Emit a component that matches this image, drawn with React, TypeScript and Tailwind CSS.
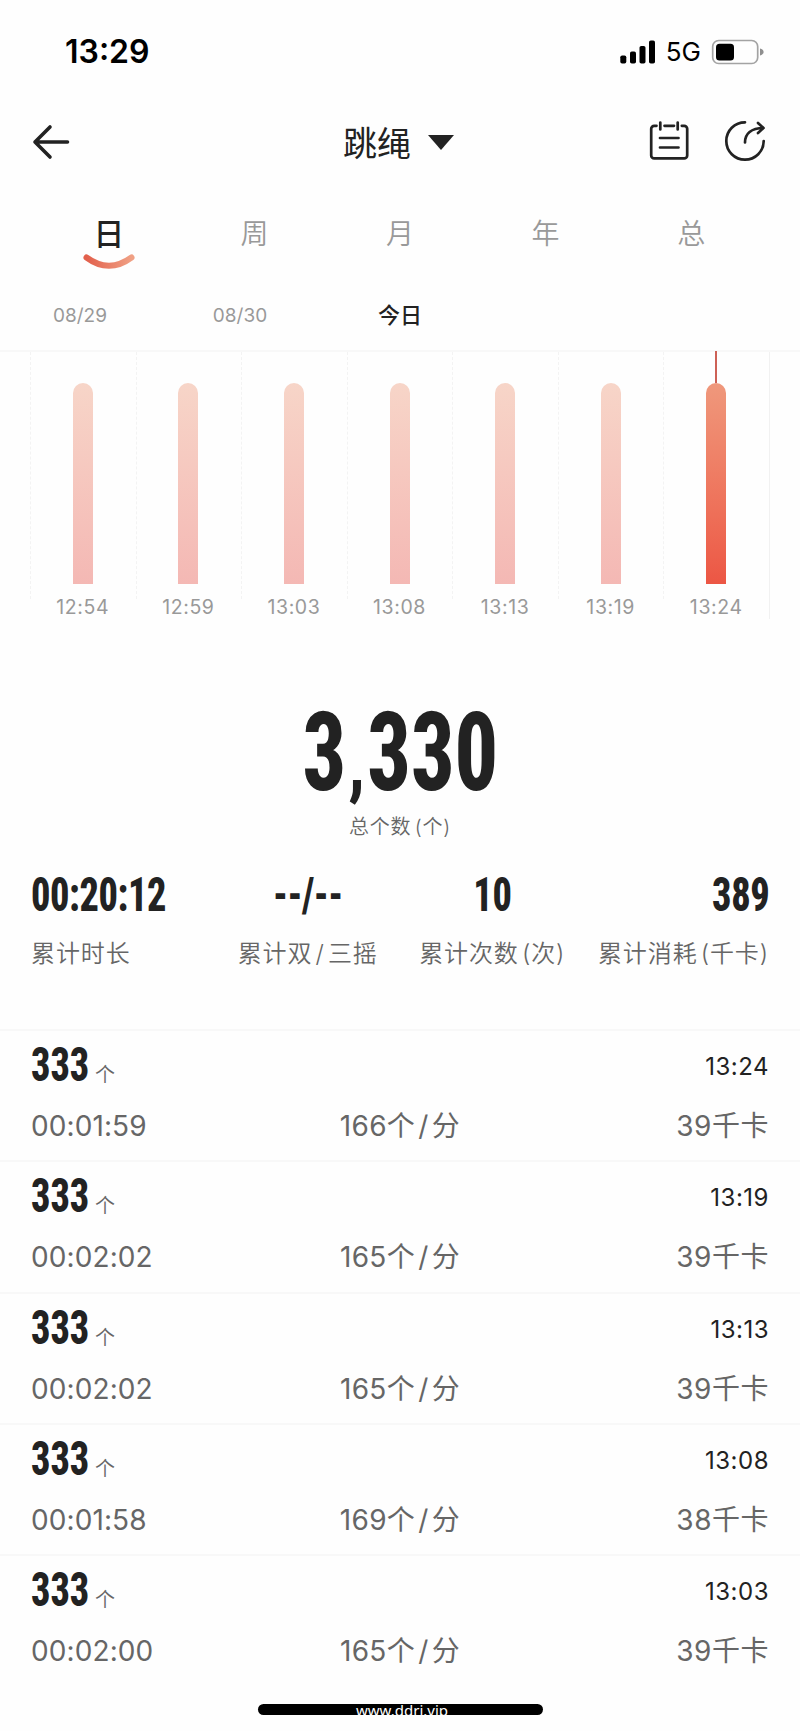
import type { ReactNode } from 'react';
import clsx from 'clsx';

const TABS = ['日', '周', '月', '年', '总'];
const DATES = ['08/29', '08/30', '今日'];
const SESSIONS = ['12:54', '12:59', '13:03', '13:08', '13:13', '13:19', '13:24'];

const RECORDS = [
  { count: 333, time: '13:24', duration: '00:01:59', pace: 166, kcal: 39 },
  { count: 333, time: '13:19', duration: '00:02:02', pace: 165, kcal: 39 },
  { count: 333, time: '13:13', duration: '00:02:02', pace: 165, kcal: 39 },
  { count: 333, time: '13:08', duration: '00:01:58', pace: 169, kcal: 38 },
  { count: 333, time: '13:03', duration: '00:02:00', pace: 165, kcal: 39 },
];

/** Condensed display number. `className` carries the size and scale origin. */
function Condensed({ children, className }: { children: ReactNode; className?: string }) {
  return (
    <span
      className={clsx(
        "block w-max whitespace-nowrap scale-x-[0.78] font-['Roboto','Liberation_Sans',sans-serif] font-extrabold text-[#222] [font-stretch:75%]",
        className,
      )}
    >
      {children}
    </span>
  );
}

function StatusBar() {
  return (
    <div className="flex h-[102px] items-center justify-between pl-[65px] pr-[35px] pt-px">
      <span className="text-[32px] font-semibold leading-none text-black">13:29</span>
      <div className="flex items-center">
        <svg width="36" height="24" viewBox="0 0 36 24">
          <rect x="0.3" y="15.5" width="6" height="8" rx="1.8" />
          <rect x="10" y="11.5" width="6" height="12" rx="1.8" />
          <rect x="19.5" y="6" width="6" height="17.5" rx="1.8" />
          <rect x="29" y="0.5" width="6" height="23" rx="1.8" />
        </svg>
        <span className="ml-[10px] pt-px text-[26px] leading-none text-black">5G</span>
        <svg className="ml-[10px]" width="54" height="26" viewBox="0 0 54 26">
          <rect x="1.7" y="1.5" width="45" height="23" rx="6" fill="none" stroke="#a3a3a3" strokeWidth="1.7" />
          <rect x="5" y="4.8" width="18" height="16.6" rx="3.5" />
          <path d="M49 9.5c2.3.6 3.6 1.9 3.6 3.5s-1.3 2.9-3.6 3.5z" fill="#8f8f8f" />
        </svg>
      </div>
    </div>
  );
}

function Header() {
  return (
    <div className="grid h-[80px] grid-cols-3 items-center pl-[31px] pr-[34px]">
      <svg width="40" height="36" viewBox="0 0 40 36" fill="none" stroke="#222" strokeWidth="3.6" strokeLinecap="round" strokeLinejoin="round">
        <path d="M36.5 18H4M19 3 4 18l15 15" />
      </svg>
      <div className="flex items-center justify-center gap-[17px] text-[34px] leading-none text-[#222]">
        <span className="pt-[3px]">跳绳</span>
        <svg width="26" height="15" viewBox="0 0 26 15" fill="#222">
          <path d="M0 0h26L13 15z" />
        </svg>
      </div>
      <div className="flex items-center justify-end gap-[35px] pb-[2px]">
        <svg width="40" height="40" viewBox="0 0 40 40" fill="none" stroke="#222" strokeWidth="2.7" strokeLinecap="round">
          <path d="M7.5 4.8H5.2a3 3 0 0 0-3 3v26.6a3 3 0 0 0 3 3h30a3 3 0 0 0 3-3V7.8a3 3 0 0 0-3-3h-2.4M15.5 4.8h9.5" />
          <path d="M11.3 1.5v7M28.7 1.5v7M11 17h18.5M11 26.5h18.5" />
        </svg>
        <svg width="42" height="42" viewBox="0 0 42 42" fill="none" stroke="#222" strokeWidth="2.7" strokeLinecap="round" strokeLinejoin="round">
          <path d="M21 2.3A18.700 18.700 0 1 0 39.7 21" />
          <path d="M21 22.5C21 14 27 8 39.5 8M34 3l5.5 5-5.5 5" />
        </svg>
      </div>
    </div>
  );
}

function Tabs() {
  return (
    <div className="grid h-[90px] grid-cols-5 px-[36px] pt-[36px]">
      {TABS.map((tab, i) => (
        <div key={tab} className="flex flex-col items-center">
          <span
            className={clsx(
              'h-[32px] text-[28px] leading-[32px]',
              i === 0 ? 'scale-110 font-medium text-[#222]' : 'font-[350] text-[#999]',
            )}
          >
            {tab}
          </span>
          {i === 0 && (
            <svg className="mt-[3px]" width="54" height="18" viewBox="0 0 54 18" fill="none">
              <defs>
                <linearGradient id="smile" x1="0" x2="1" y1="0" y2="0">
                  <stop offset="0" stopColor="#e2604c" />
                  <stop offset="1" stopColor="#f0a084" />
                </linearGradient>
              </defs>
              <path d="M4.500 4.500Q27 21 49.500 4.500" stroke="url(#smile)" strokeWidth="6" strokeLinecap="round" />
            </svg>
          )}
        </div>
      ))}
    </div>
  );
}

function Chart() {
  return (
    <div className="border-t-2 border-[#f8f8f8]">
      <div className="ml-[30px] flex h-[267px] w-[740px] border-r border-[#f1f1f1]">
        {SESSIONS.map((label, i) => {
          const active = i === SESSIONS.length - 1;
          return (
            <div key={label} className="relative flex flex-1 flex-col items-center">
              <div className="absolute left-0 top-0 h-[247px] border-l border-dashed border-[#f3f3f3]" />
              <div className={clsx('-mt-px h-[32px] w-[2px]', active && 'bg-[#cd6156]')} />
              <div
                className={clsx(
                  'h-[201px] w-[20px] rounded-t-full bg-linear-to-b',
                  active ? 'from-[#ef987c] to-[#ec5644]' : 'from-[#f7d5c8] to-[#f4b8b4]',
                )}
              />
              <span className="mt-[13px] text-[19.5px] leading-[20px] tracking-[0.6px] text-[#999]">{label}</span>
            </div>
          );
        })}
      </div>
    </div>
  );
}

function Stat({ value, label, align = 'center' }: { value: string; label: string; align?: 'start' | 'center' | 'end' }) {
  return (
    <div
      className={clsx(
        'flex flex-col',
        align === 'start' && 'items-start',
        align === 'center' && 'items-center',
        align === 'end' && 'items-end',
      )}
    >
      <Condensed
        className={clsx(
          'text-[49px] leading-[50px] tracking-[-0.5px]',
          align === 'start' && 'origin-left',
          align === 'end' && 'origin-right',
        )}
      >
        {value}
      </Condensed>
      <span className="mt-[18px] whitespace-nowrap text-[24px] font-[350] leading-[32px] tracking-[0.9px] text-[#666] [word-spacing:-4.5px]">
        {label}
      </span>
    </div>
  );
}

function Summary() {
  return (
    <div className="h-[410px] pt-[84px]">
      <div className="flex flex-col items-center">
        <Condensed className="text-[110px] leading-[100px]">
          3<span className="mx-[3px] text-[78px] font-black leading-none">,</span>330
        </Condensed>
        <span className="mt-[12px] text-[20px] font-[350] leading-[24px] tracking-[0.8px] text-[#666] [word-spacing:-3px]">总个数 (个)</span>
      </div>
      <div className="mt-[31px] grid grid-cols-4 px-[31px]">
        <Stat value="00:20:12" label="累计时长" align="start" />
        <Stat value="--/--" label="累计双 / 三摇" />
        <Stat value="10" label="累计次数 (次)" />
        <Stat value="389" label="累计消耗 (千卡)" align="end" />
      </div>
    </div>
  );
}

function RecordRow({ record }: { record: (typeof RECORDS)[number] }) {
  return (
    <div className="h-[131.25px] border-t-2 border-[#f8f8f8] px-[31px] pt-[9px]">
      <div className="flex h-[50px] items-center justify-between">
        <div className="flex items-end">
          <div className="w-[64px]">
            <Condensed className="origin-left text-[49px] leading-[50px]">{record.count}</Condensed>
          </div>
          <span className="pb-[2px] text-[20px] font-[350] leading-[26px] text-[#666]">个</span>
        </div>
        <span className="pt-[4px] text-[24px] leading-[30px] tracking-[0.5px] text-[#222]">{record.time}</span>
      </div>
      <div className="mt-[18px] grid grid-cols-3 text-[28px] leading-[36px] tracking-[0.3px] text-[#666]">
        <span className="tracking-[0.1px]">{record.duration}</span>
        <span className="text-center [word-spacing:-5px]">{record.pace}个 / 分</span>
        <span className="text-right tracking-[0.5px]">{record.kcal}千卡</span>
      </div>
    </div>
  );
}

export default function App() {
  return (
    <div className="flex h-[1731px] w-[800px] flex-col overflow-hidden bg-[#fefefe] font-['Inter','Noto_Sans_CJK_SC',sans-serif]">
      <StatusBar />
      <Header />
      <Tabs />
      <div className="flex h-[78px] items-center pt-[10px]">
        {DATES.map((date) => (
          <span
            key={date}
            className={clsx(
              'w-[160px] text-center leading-[30px]',
              date === '今日' ? '-mt-[2px] text-[22px] font-medium text-[#222]' : 'text-[19px] text-[#999]',
            )}
          >
            {date}
          </span>
        ))}
      </div>
      <Chart />
      <Summary />
      {RECORDS.map((record) => (
        <RecordRow key={record.time} record={record} />
      ))}
      <div className="mt-[19px] flex justify-center">
        <div className="flex h-[11px] w-[285px] justify-center rounded-full bg-black">
          <span className="-mt-[2px] pl-[4px] font-['Noto_Sans',sans-serif] text-[15px] leading-[16px] text-white">www.ddrj.vip</span>
        </div>
      </div>
    </div>
  );
}
